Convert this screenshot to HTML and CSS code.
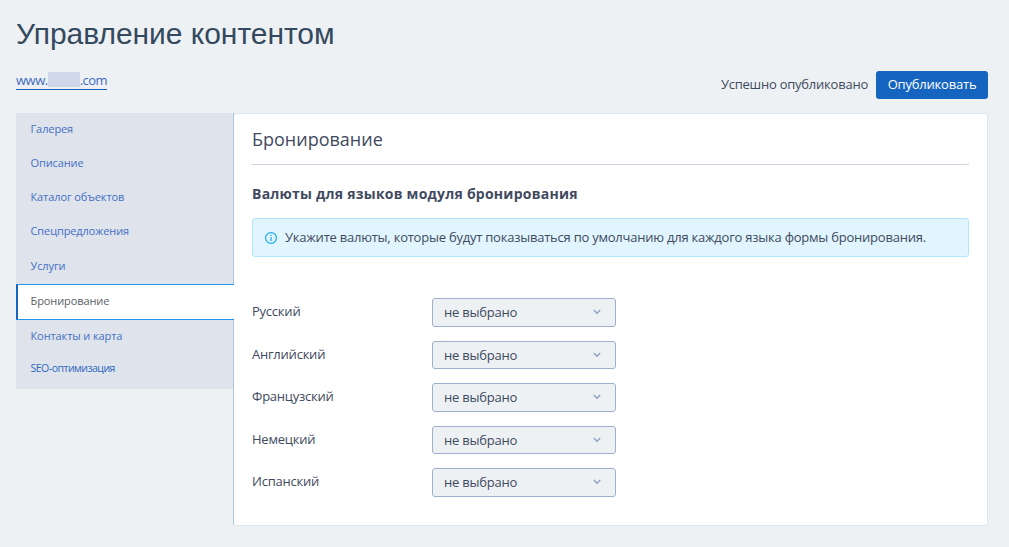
FILE: index.html
```
<!DOCTYPE html>
<html lang="ru">
<head>
<meta charset="utf-8">
<title>Управление контентом</title>
<link rel="stylesheet" href="styles.css">
</head>
<body>
<main class="page">
  <h1 class="page-title"><span>Управление контентом</span></h1>
  <div class="toolbar">
    <a class="site-link"><span>www.</span><span class="redacted"></span><span>.com</span></a>
    <div class="publish">
      <span class="status">Успешно опубликовано</span>
      <button class="publish-button"><span>Опубликовать</span></button>
    </div>
  </div>
  <div class="layout">
    <nav class="sidebar">
      <a class="item"><span>Галерея</span></a>
      <a class="item"><span>Описание</span></a>
      <a class="item"><span>Каталог объектов</span></a>
      <a class="item"><span>Спецпредложения</span></a>
      <a class="item item-tall"><span>Услуги</span></a>
      <a class="item active"><span>Бронирование</span></a>
      <a class="item item-short"><span>Контакты и карта</span></a>
      <a class="item seo"><span>SEO-оптимизация</span></a>
    </nav>
    <section class="panel">
      <h2 class="panel-title"><span>Бронирование</span></h2>
      <h3 class="section-title"><span>Валюты для языков модуля бронирования</span></h3>
      <div class="notice">
        <svg class="info" viewBox="0 0 12 12" width="12" height="12"><circle cx="6" cy="6" r="5.4"/><path d="M6 5v4M6 2.8v1.2"/></svg>
        <span>Укажите валюты, которые будут показываться по умолчанию для каждого языка формы бронирования.</span>
      </div>
      <div class="fields">
        <div class="field"><span class="label">Русский</span><div class="select"><span>не выбрано</span><svg class="chevron" viewBox="0 0 8 6" width="8" height="6"><path d="M.8 1l3.2 3.2L7.2 1"/></svg></div></div>
        <div class="field"><span class="label">Английский</span><div class="select"><span>не выбрано</span><svg class="chevron" viewBox="0 0 8 6" width="8" height="6"><path d="M.8 1l3.2 3.2L7.2 1"/></svg></div></div>
        <div class="field"><span class="label">Французский</span><div class="select"><span>не выбрано</span><svg class="chevron" viewBox="0 0 8 6" width="8" height="6"><path d="M.8 1l3.2 3.2L7.2 1"/></svg></div></div>
        <div class="field"><span class="label">Немецкий</span><div class="select"><span>не выбрано</span><svg class="chevron" viewBox="0 0 8 6" width="8" height="6"><path d="M.8 1l3.2 3.2L7.2 1"/></svg></div></div>
        <div class="field"><span class="label">Испанский</span><div class="select"><span>не выбрано</span><svg class="chevron" viewBox="0 0 8 6" width="8" height="6"><path d="M.8 1l3.2 3.2L7.2 1"/></svg></div></div>
      </div>
    </section>
  </div>
</main>
</body>
</html>
```
FILE: styles.css
```
* { box-sizing: border-box; }
body {
  margin: 0;
  background: #edf1f4;
  color: #3f4a60;
  font: 13px/18px "Open Sans", "Noto Sans", sans-serif;
  letter-spacing: -0.23px;
}
.page { height: 547px; padding: 15px 21px 0 16px; overflow: hidden; }
.page-title {
  margin: 0;
  height: 56px;
  font: 400 30px/38px "Liberation Sans", Arial, sans-serif;
  letter-spacing: -0.03px;
  color: #34495e;
  white-space: nowrap;
}
.toolbar { display: flex; justify-content: space-between; height: 42px; }
.site-link {
  display: flex;
  height: 19px;
  border-bottom: 1px solid #1565c0;
  color: #3f6cc0;
  letter-spacing: -0.5px;
}
.redacted { width: 32px; height: 15px; margin-top: 1px; background: #cfd8e8; }
.publish { display: flex; align-items: center; gap: 8px; height: 28px; }
.status { margin-top: -2px; }
.publish-button {
  width: 112px;
  height: 28px;
  padding: 0 0 2px;
  border: 0;
  border-radius: 3px;
  background: #1565c0;
  color: #fff;
  font: 500 13px/18px "Open Sans", "Noto Sans", sans-serif;
  letter-spacing: -0.2px;
}
.layout { display: flex; align-items: flex-start; height: 413px; }
.sidebar {
  width: 218px;
  height: 276px;
  margin-right: -1px;
  background: #dfe3ec;
  font-size: 11px;
  letter-spacing: -0.1px;
  z-index: 1;
}
.item {
  display: flex;
  align-items: center;
  height: 34px;
  padding: 0 0 2px 14.5px;
  border-right: 1px solid #b0c8de;
  color: #4470c2;
}
.item-tall { height: 35px; padding-bottom: 1px; }
.active {
  height: 36px;
  padding: 0 0 2px 12.5px;
  border: solid #2196f3;
  border-width: 1px 0;
  border-left: 2px solid #1565c0;
  background: #fff;
  color: #5c6168;
}
.item-short { height: 32px; padding-bottom: 0; }
.seo { height: 37px; padding-bottom: 6px; color: #2d68be; font-size: 10.5px; letter-spacing: -0.5px; }
.panel {
  width: 755px;
  height: 413px;
  padding: 10px 18px 0;
  border: 1px solid #dde6ef;
  border-left-color: #b0c8de;
  border-radius: 3px;
  background: #fff;
}
.panel-title {
  height: 41px;
  margin: 0 0 19px;
  border-bottom: 1px solid #cdd4e0;
  font-size: 18px;
  line-height: 30px;
  font-weight: 400;
  letter-spacing: 0;
}
.section-title { margin: 0 0 14px; font-size: 14px; line-height: 20px; font-weight: 700; letter-spacing: 0.23px; }
.notice {
  display: flex;
  align-items: center;
  gap: 8px;
  height: 39px;
  margin-bottom: 41px;
  padding: 0 0 1px 12px;
  border: 1px solid #b3e5fc;
  border-radius: 3px;
  background: #e1f5fe;
  white-space: nowrap;
}
.info { margin-top: 2px; fill: none; stroke: #18a7ef; stroke-width: 1.2; }
.fields { display: grid; grid-auto-rows: 42.5px; }
.field { display: grid; grid-template-columns: 180px 184px; align-items: start; }
.label { margin-top: 4px; }
.select {
  display: flex;
  align-items: center;
  justify-content: space-between;
  height: 28.5px;
  padding: 0 14px 0 11px;
  border: 1px solid #9fb0ce;
  border-radius: 3px;
  background: #edf1f4;
}
.chevron { fill: none; stroke: #8fa3c6; stroke-width: 1.5; }
```
